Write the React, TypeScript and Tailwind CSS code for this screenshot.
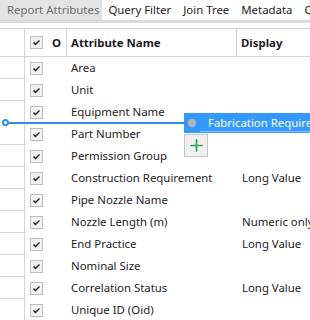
import { Plus } from "lucide-react";

const rows: { name: string; display?: string }[] = [
  { name: "Area" },
  { name: "Unit" },
  { name: "Equipment Name" },
  { name: "Part Number" },
  { name: "Permission Group" },
  { name: "Construction Requirement", display: "Long Value" },
  { name: "Pipe Nozzle Name" },
  { name: "Nozzle Length (m)", display: "Numeric only" },
  { name: "End Practice", display: "Long Value" },
  { name: "Nominal Size" },
  { name: "Correlation Status", display: "Long Value" },
  { name: "Unique ID (Oid)" },
];

const tabs = ["Report Attributes", "Query Filter", "Join Tree", "Metadata", "Query"];

function CheckBox() {
  return (
    <span className="flex h-[13px] w-[13px] shrink-0 items-center justify-center border border-[#bcbcc4] bg-[#f3f3f3]">
      <svg width="9" height="9" viewBox="0 0 9 9">
        <path d="M1.5 4.5 L3.5 6.5 L7.5 2.5" fill="none" stroke="#222" strokeWidth="1.4" />
      </svg>
    </span>
  );
}

export default function App() {
  return (
    <div
      className="relative h-[320px] w-[310px] overflow-hidden bg-white text-[11.4px] text-[#1c1c24]"
      style={{ fontFamily: '"Noto Sans", sans-serif' }}
    >
      {/* tabs */}
      <div className="flex h-[20px] items-center whitespace-nowrap">
        {tabs.map((t, i) => (
          <div
            key={t}
            className={
              i === 0
                ? "flex h-full shrink-0 items-center bg-[#e3e3e3] pl-[7px] pr-[3px] text-[#6e6e6e]"
                : "flex h-full shrink-0 items-center px-[6px]"
            }
          >
            {t}
          </div>
        ))}
      </div>
      <div className="h-[3px] bg-[#d9d9d9]" />
      <div className="h-[5px]" />

      {/* header */}
      <div className="flex h-[29px] border-y border-[#d4d4e0] font-bold">
        <div className="w-[25px] shrink-0 border-r border-[#d4d4e0]" />
        <div className="flex w-[42px] shrink-0 items-center gap-[9px] border-r border-[#d4d4e0] pl-[5px]">
          <CheckBox />
          <span>O</span>
        </div>
        <div className="flex w-[170px] shrink-0 items-center border-r border-[#d4d4e0] pl-[4px]">
          Attribute Name
        </div>
        <div className="flex flex-1 items-center pl-[4px]">Display</div>
      </div>

      {/* rows */}
      {rows.map((r) => (
        <div key={r.name} className="flex h-[22px]">
          <div className="w-[25px] shrink-0 border-r border-b border-[#d4d4e0]" />
          <div className="flex w-[42px] shrink-0 items-center pl-[5px]">
            <CheckBox />
          </div>
          <div className="flex w-[170px] shrink-0 items-center whitespace-nowrap pl-[4px]">{r.name}</div>
          <div className="flex flex-1 items-center whitespace-nowrap pl-[5px]">{r.display}</div>
        </div>
      ))}

      {/* drag overlay */}
      <div className="absolute left-[5px] top-[122px] h-[2px] w-[180px] bg-[#2f8de4]" />
      <div className="absolute left-[2px] top-[119px] h-[7px] w-[7px] rounded-full border-2 border-[#2f8de4] bg-white" />
      <div className="absolute left-[184px] top-[113px] flex h-[20px] w-[140px] items-center whitespace-nowrap bg-[#3399ff] text-white">
        <span className="ml-[4px] h-[8px] w-[8px] shrink-0 rounded-full bg-[#b4b4b4]" />
        <span className="ml-[12px] shrink-0">Fabrication Requirement</span>
        <div className="absolute bottom-[1px] left-[16px] right-0 h-[1px] bg-[#8ac4ff]" />
      </div>
      <div className="absolute left-[184px] top-[134px] flex h-[23px] w-[24px] items-center justify-center border border-[#c4c4cc] bg-[#f0f0f0]">
        <Plus size={19} strokeWidth={2.2} color="#2fa85a" />
      </div>
    </div>
  );
}
